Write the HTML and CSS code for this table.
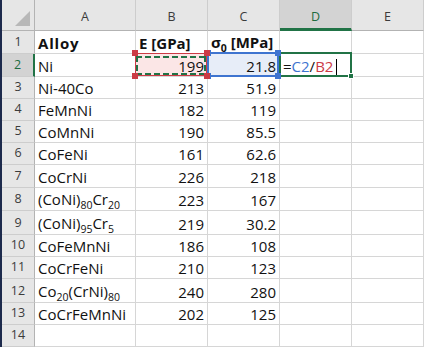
FILE: index.html
```html
<!DOCTYPE html>
<html>
<head>
<meta charset="utf-8">
<link rel="stylesheet" href="styles.css">
</head>
<body>
<div class="sheet">
  <div class="corner"><svg width="16" height="16" viewBox="0 0 16 16"><polygon points="15,0 15,15 0,15" fill="#b8b8b8"/></svg></div>
  <div class="ch">A</div>
  <div class="ch">B</div>
  <div class="ch">C</div>
  <div class="ch ch-sel">D</div>
  <div class="ch">E</div>

  <div class="rh">1</div>
  <div class="c bold"><span class="alloy">Alloy</span></div>
  <div class="c bold"><span>E [GPa]</span></div>
  <div class="c bold"><span>σ<span class="sub">0</span> [MPa]</span></div>
  <div class="c"></div>
  <div class="c"></div>

  <div class="rh rh-sel">2</div>
  <div class="c"><span>Ni</span></div>
  <div class="c num refcell ref-red"><span>199</span>
    <div class="ref red"><div class="ants"></div><i class="h tl"></i><i class="h tr"></i><i class="h bl"></i><i class="h br"></i></div>
  </div>
  <div class="c num refcell ref-blue"><span>21.8</span>
    <div class="ref blue"><i class="h tl"></i><i class="h tr"></i><i class="h bl"></i><i class="h br"></i></div>
  </div>
  <div class="c refcell edit"><span>=<span class="t-blue">C2</span>/<span class="t-red">B2</span><span class="caret"></span></span>
    <div class="active"><i class="fill"></i></div>
  </div>
  <div class="c"></div>

  <div class="rh">3</div>
  <div class="c"><span>Ni-40Co</span></div>
  <div class="c num"><span>213</span></div>
  <div class="c num"><span>51.9</span></div>
  <div class="c"></div>
  <div class="c"></div>

  <div class="rh">4</div>
  <div class="c"><span>FeMnNi</span></div>
  <div class="c num"><span>182</span></div>
  <div class="c num"><span>119</span></div>
  <div class="c"></div>
  <div class="c"></div>

  <div class="rh">5</div>
  <div class="c"><span>CoMnNi</span></div>
  <div class="c num"><span>190</span></div>
  <div class="c num"><span>85.5</span></div>
  <div class="c"></div>
  <div class="c"></div>

  <div class="rh">6</div>
  <div class="c"><span>CoFeNi</span></div>
  <div class="c num"><span>161</span></div>
  <div class="c num"><span>62.6</span></div>
  <div class="c"></div>
  <div class="c"></div>

  <div class="rh">7</div>
  <div class="c"><span>CoCrNi</span></div>
  <div class="c num"><span>226</span></div>
  <div class="c num"><span>218</span></div>
  <div class="c"></div>
  <div class="c"></div>

  <div class="rh">8</div>
  <div class="c"><span>(CoNi)<span class="sub">80</span>Cr<span class="sub">20</span></span></div>
  <div class="c num"><span>223</span></div>
  <div class="c num"><span>167</span></div>
  <div class="c"></div>
  <div class="c"></div>

  <div class="rh">9</div>
  <div class="c"><span>(CoNi)<span class="sub">95</span>Cr<span class="sub">5</span></span></div>
  <div class="c num"><span>219</span></div>
  <div class="c num"><span>30.2</span></div>
  <div class="c"></div>
  <div class="c"></div>

  <div class="rh">10</div>
  <div class="c"><span>CoFeMnNi</span></div>
  <div class="c num"><span>186</span></div>
  <div class="c num"><span>108</span></div>
  <div class="c"></div>
  <div class="c"></div>

  <div class="rh">11</div>
  <div class="c"><span>CoCrFeNi</span></div>
  <div class="c num"><span>210</span></div>
  <div class="c num"><span>123</span></div>
  <div class="c"></div>
  <div class="c"></div>

  <div class="rh">12</div>
  <div class="c"><span>Co<span class="sub">20</span>(CrNi)<span class="sub">80</span></span></div>
  <div class="c num"><span>240</span></div>
  <div class="c num"><span>280</span></div>
  <div class="c"></div>
  <div class="c"></div>

  <div class="rh">13</div>
  <div class="c"><span>CoCrFeMnNi</span></div>
  <div class="c num"><span>202</span></div>
  <div class="c num"><span>125</span></div>
  <div class="c"></div>
  <div class="c"></div>

  <div class="rh">14</div>
  <div class="c"></div>
  <div class="c"></div>
  <div class="c"></div>
  <div class="c"></div>
  <div class="c"></div>
</div>
</body>
</html>
```

FILE: styles.css
```css
* { box-sizing: border-box; }
html, body { margin: 0; padding: 0; background: #ffffff; }
body { width: 425px; height: 348px; overflow: hidden; font-family: "Open Sans", "Noto Sans", sans-serif; }

.sheet {
  display: grid;
  width: 424px;
  grid-template-columns: 33px 101px 72px 72px 72px 72px;
  grid-template-rows: 31px 23px 23px 22px 22px 22px 22px 23px 23px 24px 22px 22px 24px 22px 22px;
  border-left: 2px solid #1d2a4c;
  background: #ffffff;
}

.corner {
  background: #e6e6e6;
  border-right: 1px solid #b3b3b3;
  border-bottom: 1px solid #b3b3b3;
  display: flex;
  align-items: flex-end;
  justify-content: flex-end;
  padding: 0 3px 3px 0;
}

.ch {
  background: #e6e6e6;
  border-right: 1px solid #cdcdcd;
  border-bottom: 1px solid #b3b3b3;
  display: flex;
  align-items: flex-end;
  justify-content: center;
  font-size: 12.5px;
  line-height: 20px;
  padding-bottom: 3px;
  color: #3b3b3b;
}
.ch-sel {
  background: #d3d3d3;
  color: #1e6b3f;
  border-bottom: 3px solid #217346;
  padding-bottom: 1px;
}

.rh {
  background: #e6e6e6;
  border-right: 1px solid #b3b3b3;
  border-bottom: 1px solid #cdcdcd;
  display: flex;
  align-items: flex-end;
  justify-content: center;
  font-size: 12.5px;
  line-height: 20px;
  padding-bottom: 1px;
  color: #3b3b3b;
}
.rh-sel {
  background: #d3d3d3;
  color: #1e6b3f;
  border-right: 2px solid #217346;
}

.c {
  border-right: 1px solid #d6d6d6;
  border-bottom: 1px solid #d6d6d6;
  display: flex;
  align-items: flex-end;
  padding: 0 3px 0 3px;
  font-size: 15px;
  line-height: 20px;
  color: #111;
  white-space: nowrap;
}
.bold { font-weight: 700; font-size: 15px; }
.alloy { letter-spacing: 0.8px; }
.num { justify-content: flex-end; padding-right: 3px; }

.sub {
  font-size: 10.5px;
  line-height: 10px;
  vertical-align: -4px;
  letter-spacing: 0;
}

.refcell { position: relative; }
.ref-red { background: #fbe6e6; }
.ref-blue { background: #e7edf8; }

.ref {
  position: absolute;
  top: -1px;
  left: -1px;
  right: 0;
  bottom: 0;
  border: 1px solid;
  pointer-events: none;
}
.ref.red { border-color: #cc3b45; z-index: 3; }
.ref.blue { border: 2px solid #3e74d0; top: -2px; bottom: -1px; z-index: 2; }

.ants {
  position: absolute;
  top: 2px;
  left: 0;
  right: 0;
  bottom: 0;
  background:
    repeating-linear-gradient(90deg, #217346 0 6px, transparent 6px 9px) left top / 100% 2px no-repeat,
    repeating-linear-gradient(90deg, #217346 0 6px, transparent 6px 9px) left bottom / 100% 2px no-repeat,
    repeating-linear-gradient(180deg, #217346 0 6px, transparent 6px 9px) left top / 2px 100% no-repeat,
    repeating-linear-gradient(180deg, #217346 0 6px, transparent 6px 9px) right top / 2px 100% no-repeat;
}

.h {
  position: absolute;
  width: 6px;
  height: 6px;
}
.red .h { background: #cc3b45; }
.blue .h { background: #3e74d0; }
.h.tl { left: -4px; top: -4px; }
.h.tr { right: -4px; top: -4px; }
.h.bl { left: -4px; bottom: -4px; }
.h.br { right: -4px; bottom: -4px; }

.edit { padding-left: 3px; }
.t-blue { color: #3e74d0; }
.t-red { color: #cc3b45; }
.caret {
  display: inline-block;
  width: 1px;
  height: 17px;
  background: #000;
  margin-left: 3px;
  vertical-align: -4px;
}

.active {
  position: absolute;
  top: -2px;
  left: -1px;
  right: -1px;
  bottom: -1px;
  border: 2px solid #217346;
  z-index: 1;
}
.fill {
  position: absolute;
  right: -4px;
  bottom: -4px;
  width: 6px;
  height: 6px;
  background: #217346;
  border: 1px solid #ffffff;
}
```
